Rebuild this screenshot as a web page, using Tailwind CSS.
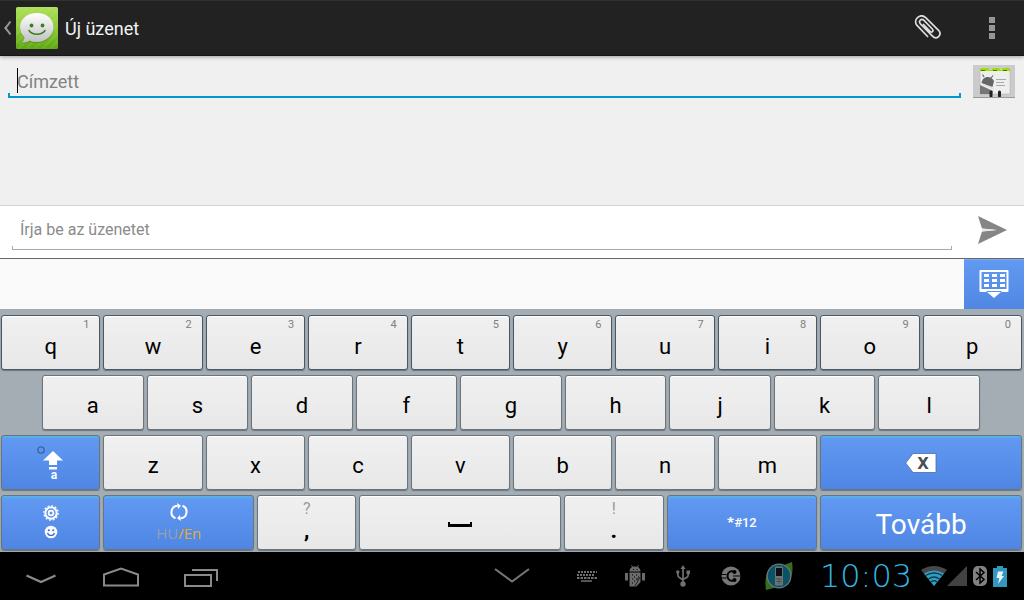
<!DOCTYPE html>
<html lang="hu">
<head>
<meta charset="utf-8">
<meta name="viewport" content="width=device-width, initial-scale=1">
<title>Új üzenet</title>
<script src="https://cdn.jsdelivr.net/npm/@tailwindcss/browser@4"></script>
</head>
<body class="flex min-h-screen flex-col bg-[#f0f0f0] font-['Roboto',sans-serif] text-black">

<header class="relative z-10 flex h-14 shrink-0 items-center border-t border-b border-t-[#303030] border-b-[#151515] bg-[#222] shadow-[0_1px_4px_rgba(0,0,0,0.35)]">
  <button aria-label="Vissza" class="flex items-center pl-1">
    <svg width="8" height="16" viewBox="0 0 8 16" fill="none" stroke="#999" stroke-width="2"><path d="M6.500 1.500C4.600 4 3.600 5.500 1.400 8c2.200 2.500 3.200 4 5.100 6.500"/></svg>
    <svg class="ml-1" width="42" height="42" viewBox="0 0 42 42">
      <defs>
        <linearGradient id="g" x1="0" y1="0" x2="0" y2="1"><stop offset="0" stop-color="#b0e05c"/><stop offset=".5" stop-color="#8fcb3a"/><stop offset="1" stop-color="#5ea614"/></linearGradient>
        <linearGradient id="b" x1="0" y1="0" x2="0" y2="1"><stop offset="0" stop-color="#fff"/><stop offset="1" stop-color="#bfc0c2"/></linearGradient>
      </defs>
      <rect width="42" height="42" rx="1.500" fill="url(#g)"/>
      <path d="M0 12 12 0M0 20 20 0M0 28 28 0M0 36 36 0M2 42 42 2M10 42 42 10M18 42 42 18M26 42 42 26M34 42 42 34" stroke="#d0f090" stroke-opacity=".12" stroke-width="2"/>
      <path d="M21 7c9.500 0 16.500 5.500 16.500 13.500S30.500 36 21 36c-3 0-5.500-.5-7.500-1.500-2 1.700-4.500 2.300-7.500 2 1.800-1.600 2.500-3.500 2.300-5.500C5.700 28.500 4 24.500 4 20.500 4 12.500 11.500 7 21 7z" fill="#3d7a0c" opacity=".5"/>
      <path d="M21 6c9.500 0 16.500 6 16.500 14S30.500 35 21 35c-3 0-5.500-.5-7.500-1.500-2 1.700-4.500 2.300-7.500 2 1.800-1.600 2.500-3.500 2.300-5.500C5.700 27.500 4 24 4 20 4 12 11.500 6 21 6z" fill="url(#b)"/>
      <circle cx="15.500" cy="18.500" r="1.900" fill="#3f7f1c"/><circle cx="26.500" cy="18.500" r="1.900" fill="#3f7f1c"/>
      <path d="M13 23.500c3.200 5 12.800 5 16 0" fill="none" stroke="#3f7f1c" stroke-width="1.500" stroke-linecap="round"/>
    </svg>
  </button>
  <h1 class="ml-[7px] flex-1 pt-0.5 text-lg text-[#f3f3f3]">Új üzenet</h1>
  <button aria-label="Csatolás" class="flex h-full w-16 items-center justify-center">
    <svg width="28" height="26" viewBox="0 0 28 26" fill="none" stroke="#ddd" stroke-width="1.700" stroke-linecap="round" stroke-linejoin="round"><path d="M9.500 9.500 15.800 16.200C17.800 18.200 20.200 16 18.300 14L10 5.400C7.500 2.800 4 6 6.400 8.800L18.500 21.200C22.500 25.200 28.700 20 24.600 15.300L11.700 2.600C6.500-2.200-1.300 4.500 2.800 10.200L13.600 21.500"/></svg>
  </button>
  <button aria-label="További lehetőségek" class="flex h-full w-16 flex-col items-center justify-center gap-0.5">
    <span class="size-1.5 bg-[#969696]"></span><span class="size-1.5 bg-[#969696]"></span><span class="size-1.5 bg-[#969696]"></span>
  </button>
</header>

<main class="flex flex-1 flex-col">
  <section class="flex flex-1 items-start gap-3 pt-2 pr-[9px] pl-2">
    <div class="relative flex-1">
      <input aria-label="Címzett" type="text" placeholder="Címzett" class="block h-[34px] w-full bg-transparent px-[9px] text-lg outline-none placeholder:text-[#828282]">
      <span class="absolute inset-x-0 bottom-0 h-[5px] border-x-2 border-b-2 border-[#0099cc]"></span>
      <span class="absolute top-1 left-[9px] h-[25px] w-px bg-black"></span>
    </div>
    <button aria-label="Névjegyek" class="mt-px flex h-[33px] items-end justify-center border-b border-[#999] bg-[#cbcbcb]">
      <svg width="42" height="32" viewBox="0 0 42 32">
        <path d="M7 4h30v25H7z" fill="#eee" stroke="#b5b5b5" stroke-width=".6"/>
        <path d="M7 6V4l2-1h6l2 2h1l2-2h6l2 2h1l1-2h6l1 2v1z" fill="#9be000"/>
        <path d="M8 5.500h4m8 0h4m6 0h4" stroke="#497800" stroke-width="1.200"/>
        <path d="M7 20 20 26l-1 3H7z" fill="#777"/>
        <path d="M8.500 18c1-7.500 9.500-8 12.500-2l-1.500 6z" fill="#666"/>
        <path d="m11 12-1.500-2.500M18 13l2-2.500" stroke="#666" stroke-width="1.200"/><path d="M7 18l14 6" stroke="#ddd" stroke-width="1"/>
        <path d="M23 14.500h10M23 17.500h8M23 20.500h9" stroke="#aaa" stroke-width="1"/>
        <path d="M18 31v-4M26.500 31v-4" stroke="#222" stroke-width="3" stroke-linecap="round" fill="none"/>
      </svg>
    </button>
  </section>

  <section class="flex h-[54px] items-start border-t border-b border-t-[#d3d3d3] border-b-[#666] bg-white pl-3">
    <div class="relative flex-1">
      <input aria-label="Üzenet" type="text" placeholder="Írja be az üzenetet" class="block h-11 w-full bg-transparent px-2 pt-0.5 text-base outline-none placeholder:text-[#8b8b8b]">
      <span class="absolute inset-x-0 bottom-0 h-1 border-x border-b border-[#aaa]"></span>
    </div>
    <button aria-label="Küldés" class="flex h-12 w-[72px] items-center justify-center pl-2">
      <svg width="30" height="28" viewBox="0 0 30 28"><path d="M1 0 30 14 1 28 5 15.500 20 14 5 12.500z" fill="#858585"/><path d="M5 12.500 20 14 5 15.500z" fill="#e8e8e8"/></svg>
    </button>
  </section>
</main>

<section aria-label="Billentyűzet" class="shrink-0 bg-[#a5adb4]">
  <div class="flex h-[50px] justify-end bg-[#fafafa]">
    <button aria-label="Billentyűzet elrejtése" class="flex w-[60px] items-center justify-center border-t border-[#7eaaf0] bg-linear-to-b from-[#6299f2] to-[#5087e3] pb-0.5">
      <svg width="30" height="28" viewBox="0 0 30 28"><path fill-rule="evenodd" fill="#fff" d="M1.500 0h27q1 0 1 1v20q0 1-1 1H23l-1-1H8l-1 1H1.500q-1 0-1-1V1q0-1 1-1zM2.500 2v17h25V2z"/><path d="M5 4h5v3H5zm8 0h5v3h-5zm8 0h5v3h-5zM5 9h5v3H5zm8 0h5v3h-5zm8 0h5v3h-5zM5 14h5v3H5zm8 0h5v3h-5zm8 0h5v3h-5z" fill="#fff"/><path d="M8 22h14l-7 6z" fill="#fff"/></svg>
    </button>
  </div>

  <div class="flex flex-col gap-[5px] pt-1.5 pb-0.5 [&_button]:relative [&_button]:flex [&_button]:h-[55px] [&_button]:min-w-0 [&_button]:flex-col [&_button]:items-center [&_button]:justify-center [&_button]:rounded-[3px] [&_button]:border [&_button]:border-[#69747d] [&_button]:bg-linear-to-b [&_button]:from-[#f0f0f0] [&_button]:to-[#e8e8e8] [&_button]:text-[22px] [&_button]:shadow-[inset_0_1px_0_#fff,0_1px_1px_rgba(50,60,70,0.5)] [&_[data-fn]]:from-[#6299f2] [&_[data-fn]]:to-[#4f86e4] [&_[data-fn]]:text-white [&_[data-fn]]:shadow-[inset_0_2px_0_#58aee6,0_1px_1px_rgba(50,60,70,0.5)]">
    <div class="grid grid-cols-10 gap-[3px] pr-0.5 pl-px [&>button]:border-[#4a5864] [&>button]:pt-2 [&_small]:absolute [&_small]:top-[3px] [&_small]:right-2.5 [&_small]:text-[11px] [&_small]:leading-3 [&_small]:text-[#808080]">
      <button>q<small>1</small></button>
      <button>w<small>2</small></button>
      <button>e<small>3</small></button>
      <button>r<small>4</small></button>
      <button>t<small>5</small></button>
      <button>y<small>6</small></button>
      <button>u<small>7</small></button>
      <button>i<small>8</small></button>
      <button>o<small>9</small></button>
      <button>p<small>0</small></button>
    </div>
    <div class="grid grid-cols-9 gap-[3px] pr-11 pl-[42px] [&>button]:pt-1.5">
      <button>a</button>
      <button>s</button>
      <button>d</button>
      <button>f</button>
      <button>g</button>
      <button>h</button>
      <button>j</button>
      <button>k</button>
      <button>l</button>
    </div>
    <div class="grid grid-cols-10 gap-[3px] pr-0.5 pl-px [&>button]:pt-1.5">
      <button data-fn aria-label="Shift">
        <svg class="-mt-1.5" width="34" height="36" viewBox="0 0 34 36">
          <circle cx="7" cy="5" r="3.200" fill="none" stroke="#3c62a0" stroke-width="1.300"/>
          <path d="m19 6 10 9.500h-6V20h-8v-4.500H9zM15 22h8v2.500h-8z" fill="#fff"/>
          <text x="20" y="34" text-anchor="middle" font-family="Roboto" font-weight="700" font-size="12" fill="#fff">a</text>
        </svg>
      </button>
      <button>z</button>
      <button>x</button>
      <button>c</button>
      <button>v</button>
      <button>b</button>
      <button>n</button>
      <button>m</button>
      <button data-fn aria-label="Törlés" class="col-span-2">
        <svg class="-mt-1.5" width="32" height="20" viewBox="0 0 32 20"><path d="M.7 10 8 .5h23v19H8z" fill="#fff" stroke="#4a6ca8" stroke-width=".8"/><text x="18" y="15.500" text-anchor="middle" font-family="DejaVu Sans" font-weight="700" font-size="15" fill="#4a4f58">X</text></svg>
      </button>
    </div>
    <div class="grid grid-cols-20 gap-[3px] pr-0.5 pl-px">
      <button data-fn aria-label="Beállítások" class="col-span-2 gap-1 pb-0.5">
        <svg width="16" height="16" viewBox="0 0 16 16" fill="none" stroke="#fff"><circle cx="8" cy="8" r="5.700" stroke-width="2"/><circle cx="8" cy="8" r="7.200" stroke-width="1.200" stroke-dasharray="1.900 1.870"/><circle cx="8" cy="8" r="2.400" stroke-width="1.700"/></svg>
        <svg width="14" height="14" viewBox="0 0 14 14"><circle cx="7" cy="7" r="6.300" fill="#f7f9ff"/><circle cx="4.800" cy="5.200" r="1" fill="#3d68b8"/><circle cx="9.200" cy="5.200" r="1" fill="#3d68b8"/><path d="M3.500 8c1.200 3.300 5.800 3.300 7 0" fill="none" stroke="#3d68b8" stroke-width="1.200"/></svg>
      </button>
      <button data-fn class="col-span-3 gap-0.5" aria-label="Nyelv: HU/En">
        <svg width="18" height="18" viewBox="0 0 18 18" fill="none" stroke="#fff" stroke-width="2"><path d="M5.500 15.200A6.500 6.500 0 0 1 7.500 2.700M12.500 2.800A6.500 6.500 0 0 1 10.500 15.300"/><path d="m7 0 4 2.800L8 6zM11 18l-4-2.800L10 12z" fill="#fff" stroke="none"/></svg>
        <span class="font-['Open_Sans',sans-serif] text-[15px] leading-5"><span class="text-[#93a0b4]">HU</span><span class="text-[#e5ac2c]">/En</span></span>
      </button>
      <button class="col-span-2 pb-1"><span class="text-base leading-5 text-[#999]">?</span><span class="text-xl leading-6 font-black">,</span></button>
      <button class="col-span-4" aria-label="Szóköz"><span class="mt-1 h-[5px] w-6 border-x-2 border-b-[3px] border-black"></span></button>
      <button class="col-span-2 pb-1"><span class="text-base leading-5 text-[#999]">!</span><span class="text-xl leading-6 font-black">.</span></button>
      <button data-fn class="col-span-3"><span class="text-[13px] font-medium"><span class="font-['Open_Sans',sans-serif] font-bold">*</span>#12</span></button>
      <button data-fn class="col-span-4"><span class="pt-1 text-[28px]">Tovább</span></button>
    </div>
  </div>
</section>

<nav class="grid h-12 shrink-0 grid-cols-[1fr_auto_1fr] items-center bg-black">
  <div class="flex pl-px [&>button]:flex [&>button]:h-12 [&>button]:w-20 [&>button]:items-center [&>button]:justify-center">
    <button aria-label="Elrejtés"><svg class="mt-1.5" width="30" height="10" viewBox="0 0 30 10" fill="none" stroke="#8a8a8a" stroke-width="2.200"><path d="m.5 1.500 14.500 6.500 14.500-6.500"/></svg></button>
    <button aria-label="Kezdőképernyő"><svg class="mt-0.5" width="36" height="20" viewBox="0 0 36 20" fill="none" stroke="#8a8a8a" stroke-width="2"><path d="M1 18.500V7.500L18 1.500l17 6v11z"/></svg></button>
    <button aria-label="Legutóbbiak"><svg class="mt-1" width="34" height="18" viewBox="0 0 34 18" fill="none" stroke="#8a8a8a" stroke-width="2"><path d="M1 6h26v11H1zM8 1h25v11"/></svg></button>
  </div>
  <button aria-label="Billentyűzet bezárása" class="flex h-12 w-12 items-center justify-center"><svg width="36" height="16" viewBox="0 0 36 16" fill="none" stroke="#777" stroke-width="2"><path d="M1 1 18 13.500 35 1"/></svg></button>
  <div class="flex items-center justify-end pr-[17px]">
    <div class="flex [&>span]:flex [&>span]:size-12 [&>span]:items-center [&>span]:justify-center">
      <span><svg width="20" height="11" viewBox="0 0 20 11" stroke="#707070" stroke-width="2" fill="none"><path d="M1 1h19" stroke-dasharray="2 1"/><path d="M0 4h18" stroke-dasharray="2 1"/><path d="M0 7h20" stroke-dasharray="2.500 1"/><path d="M4 10h11" stroke-width="1.500"/></svg></span>
      <span><svg width="20" height="22" viewBox="0 0 20 22" fill="#6b6b6b"><path d="M4.500 6.500C4.500 4 6 2.600 7.300 2L6 .4l.6-.4L8.200 1.700q1.800-.5 3.600 0L13.400 0l.6.4L12.700 2c1.300.6 2.800 2 2.800 4.500zM0 8h3v7.500H0zM17 8h3v7.500h-3z"/><path d="M4.500 7.500h11V17l-4 4.500h-7z"/><path d="M8 4.500h1m2.500 0h1M7 10h1m3 0h1m-3 2h1m3 0h1m-7 2h1m3 0h1m-3 2h1m-3 2h1m4-4h1" stroke="#000" stroke-width="1.200"/><path d="m15 12-5 9" stroke="#222" fill="none"/></svg></span>
      <span><svg width="14" height="22" viewBox="0 0 14 22" fill="#707070"><path d="m7 0 2.500 4h-5z"/><circle cx="7" cy="19" r="2.700"/><circle cx="1.800" cy="7" r="1.700"/><path d="M10.500 5.500h3.500V9h-3.500z"/><path d="M7 3v15M1.800 7v3q0 1.500 1.500 2.500L7 15M12.200 8v2q0 1.500-1.500 2.500L7 14.500" fill="none" stroke="#707070" stroke-width="1.700"/></svg></span>
      <span><svg width="20" height="20" viewBox="0 0 20 20"><circle cx="10" cy="10" r="9.500" fill="#777"/><path d="M0 8.500h5.500M0 12h5.500M12 10h8" stroke="#000" stroke-width="1.200"/><path d="M13.500 6C10 4 6.500 6 6.500 10s3.500 6 7 4" fill="none" stroke="#000" stroke-width="2"/><circle cx="13.500" cy="6" r="2"/><circle cx="13.500" cy="14" r="2"/></svg></span>
      <span><svg width="28" height="28" viewBox="0 0 28 28"><path d="M27 0q2 12-3 19L9 26l-8 2Q-1 14 4 8l15-5z" fill="#386d20"/><circle cx="14" cy="14" r="12.500" fill="#66797d"/><circle cx="14" cy="14" r="11.200" fill="#0c5266"/><rect x="10" y="4.500" width="8" height="19" rx="1" fill="#6d7373"/><path d="M11 6h6v8h-6z" fill="#0b1012"/><path d="M11 17h6m-6 2.500h6M14 16v6" stroke="#454b4b" stroke-width=".8"/></svg></span>
    </div>
    <time class="w-[118px] pl-2 text-center font-['DejaVu_Sans',sans-serif] text-[32px] leading-none font-extralight text-[#33b5e5]">10:03</time>
    <div class="flex items-center">
      <svg width="26" height="20" viewBox="0 0 26 20"><path d="M0 4Q13-4 26 4L13 20z" fill="#484848"/><path d="M3 7.500q10-6 20 0L13 20z" fill="#2f9dc4"/><path d="M4.500 9.500q8.500-5 17 0M7.500 13q5.500-4 11 0M10 16q3-2.500 6 0" fill="none" stroke="#123846" stroke-width="1.300"/></svg>
      <svg width="20" height="20" viewBox="0 0 20 20"><path d="M20 0v20H0z" fill="#424242"/></svg>
      <svg class="ml-1.5" width="14" height="20" viewBox="0 0 14 20"><rect width="14" height="20" rx="5" fill="#828282"/><path d="m3 6 8 7.500L7 17V3l4 3.500L3 14" fill="none" stroke="#000" stroke-width="1.500"/></svg>
      <svg class="ml-1.5" width="14" height="21" viewBox="0 0 14 21"><path d="M4 0h6v2h4v19H0V2h4z" fill="#3398bf"/><path d="M5 5.500h5.500L8.500 10H11l-6 8 1.300-6H3.500z" fill="#e8f4f8"/></svg>
    </div>
  </div>
</nav>
</body>
</html>
